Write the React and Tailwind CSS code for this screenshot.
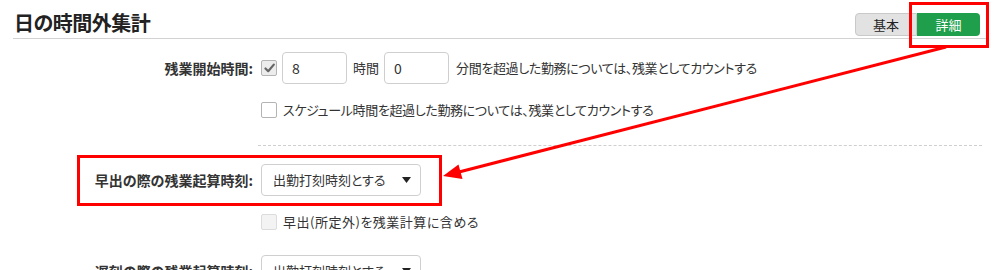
import React from "react";

const font = "font-['Noto_Sans_CJK_JP','Noto_Sans',sans-serif]";

function CheckBox({ checked, disabled }) {
  return (
    <span
      className={`flex h-[16px] w-[16px] shrink-0 items-center justify-center rounded-[2px] border ${
        disabled ? "border-[#dcdcdc] bg-[#f3f3f3]" : checked ? "border-[#b4b4b4] bg-[#ececec]" : "border-[#b4b4b4] bg-white"
      }`}
    >
      {checked && (
        <svg width="11" height="10" viewBox="0 0 11 10">
          <path d="M1.5 5.5 L4.2 8.2 L9.8 1.6" fill="none" stroke="#666" strokeWidth="2.2" strokeLinecap="round" strokeLinejoin="round" />
        </svg>
      )}
    </span>
  );
}

function NumBox({ value }) {
  return (
    <div className="flex h-[32px] w-[65px] items-center rounded-[4px] border border-[#cfcfcf] bg-white pl-[9px] text-[14px] text-[#333]">
      {value}
    </div>
  );
}

function SelectBox({ value }) {
  return (
    <div className="flex h-[32px] w-[160px] items-center justify-between rounded-[4px] border border-[#cfcfcf] bg-white pl-[11px] pr-[9px] text-[13px] text-[#333]">
      <span>{value}</span>
      <svg width="9" height="6" viewBox="0 0 9 6">
        <path d="M0 0 H9 L4.5 6 Z" fill="#222" />
      </svg>
    </div>
  );
}

function Row({ label, className = "", children }) {
  return (
    <div className={`flex items-center ${className}`}>
      <div className="w-[253px] shrink-0 text-right text-[14px] font-bold text-[#333]">{label}</div>
      <div className="ml-[8px] flex items-center">{children}</div>
    </div>
  );
}

export default function App() {
  return (
    <div className={`relative h-[270px] w-[1007px] overflow-hidden bg-white ${font} text-[13px] text-[#333] [font-feature-settings:'palt']`}>
      {/* header */}
      <div className="ml-[13px] mr-[20px] flex items-end justify-between border-b border-[#d2d2d2] pb-[2px] pt-[11px]">
        <h1 className="ml-[1px] mb-[1px] text-[20px] font-bold leading-[24px] tracking-[-0.5px] text-[#222]">日の時間外集計</h1>
        <div className="mr-[7px] flex text-[13px]">
          <button className="h-[23px] w-[62px] rounded-l-[4px] border border-[#c9c9c9] bg-[#e2e2e2] text-[#222]">基本</button>
          <button className="h-[23px] w-[63px] rounded-r-[4px] bg-[#1f9e4b] text-white">詳細</button>
        </div>
      </div>

      {/* form */}
      <Row label="残業開始時間:" className="mt-[13px] h-[32px]">
        <CheckBox checked />
        <div className="ml-[5px]">
          <NumBox value="8" />
        </div>
        <span className="ml-[6px]">時間</span>
        <div className="ml-[5px]">
          <NumBox value="0" />
        </div>
        <span className="ml-[7px] tracking-[-0.35px]">分間を超過した勤務については、残業としてカウントする</span>
      </Row>

      <Row label="" className="mt-[15px] h-[22px]">
        <CheckBox />
        <span className="ml-[6px] tracking-[-0.35px]">スケジュール時間を超過した勤務については、残業としてカウントする</span>
      </Row>

      <div className="ml-[258px] mt-[24px] w-[724px] border-t border-dashed border-[#cfcfcf]" />

      <Row label="早出の際の残業起算時刻:" className="mt-[18px] h-[32px]">
        <SelectBox value="出勤打刻時刻とする" />
      </Row>

      <Row label="" className="mt-[15px] h-[22px]">
        <CheckBox disabled />
        <span className="ml-[6px] tracking-[0.5px]">早出(所定外)を残業計算に含める</span>
      </Row>

      <Row label="遅刻の際の残業起算時刻:" className="mt-[22px] h-[32px]">
        <SelectBox value="出勤打刻時刻とする" />
      </Row>

      {/* annotations */}
      <div className="pointer-events-none absolute left-[909px] top-[2px] h-[46px] w-[80px] border-[3px] border-[#ff0000]" />
      <div className="pointer-events-none absolute left-[77px] top-[155px] h-[51px] w-[365px] border-[3px] border-[#ff0000]" />
      <svg className="pointer-events-none absolute left-0 top-0" width="1007" height="270">
        <line x1="946" y1="47" x2="459" y2="172" stroke="#ff0000" strokeWidth="3" />
        <polygon points="443,176 462.5,179 458.5,164.5" fill="#ff0000" />
      </svg>
    </div>
  );
}
